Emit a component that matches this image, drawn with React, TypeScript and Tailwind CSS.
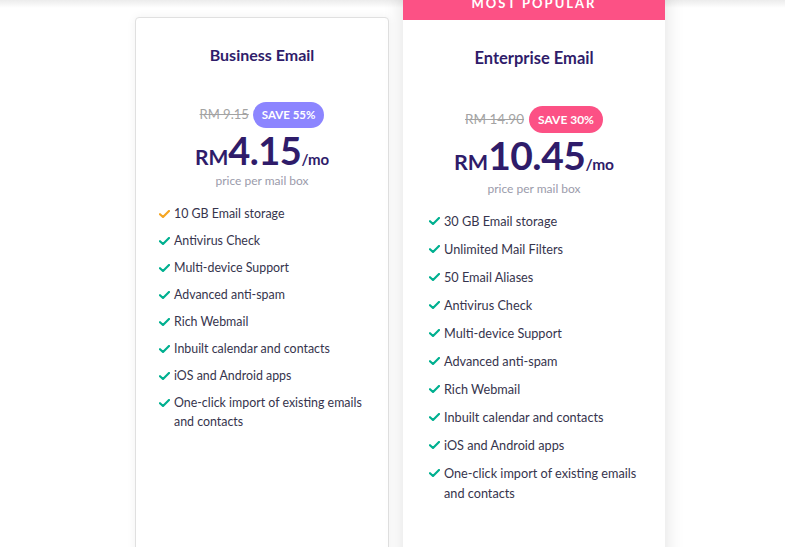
import React from 'react';

type Plan = {
  name: string;
  oldPrice: string;
  save: string;
  price: string;
  features: string[];
  popular?: boolean;
};

const business: Plan = {
  name: 'Business Email',
  oldPrice: 'RM 9.15',
  save: 'SAVE 55%',
  price: '4.15',
  features: [
    '10 GB Email storage',
    'Antivirus Check',
    'Multi-device Support',
    'Advanced anti-spam',
    'Rich Webmail',
    'Inbuilt calendar and contacts',
    'iOS and Android apps',
    'One-click import of existing emails and contacts',
  ],
};

const enterprise: Plan = {
  name: 'Enterprise Email',
  oldPrice: 'RM 14.90',
  save: 'SAVE 30%',
  price: '10.45',
  popular: true,
  features: [
    '30 GB Email storage',
    'Unlimited Mail Filters',
    '50 Email Aliases',
    'Antivirus Check',
    'Multi-device Support',
    'Advanced anti-spam',
    'Rich Webmail',
    'Inbuilt calendar and contacts',
    'iOS and Android apps',
    'One-click import of existing emails and contacts',
  ],
};

const Check: React.FC<{ color: string }> = ({ color }) => (
  <svg width="11" height="8" viewBox="0 0 11 8" className="shrink-0">
    <path d="M1 4.2 L4 7 L10 1" fill="none" stroke={color} strokeWidth="2.2" strokeLinecap="round" strokeLinejoin="round" />
  </svg>
);

const App: React.FC = () => {
  return (
    <div
      className="relative h-[547px] w-[785px] overflow-hidden bg-white"
      style={{ fontFamily: 'Lato, "Open Sans", sans-serif' }}
    >
      {/* header shadow */}
      <div className="absolute left-0 right-0 top-0 h-[8px] bg-gradient-to-b from-[#ececec] to-transparent" />

      <div className="flex gap-[14px] pl-[135px]">
        {/* Business card */}
        <div className="relative mt-[17px] min-h-[600px] w-[254px] rounded-[4px] border border-[#e0e0e0] bg-white shadow-[0_0_10px_rgba(0,0,0,0.06)]">
          <h3 className="pt-[27px] text-center text-[16px] font-bold leading-[20px] text-[#2f1c6a]">
            {business.name}
          </h3>
          <div className="mt-[37px] flex items-center justify-center gap-[4px]">
            <span className="text-[13px] text-[#a3a3a3] line-through">{business.oldPrice}</span>
            <span className="flex h-[26px] items-center rounded-full bg-[#8c85ff] px-[9px] text-[11.5px] font-bold text-white">
              {business.save}
            </span>
          </div>
          <div className="mt-[2px] flex items-baseline justify-center text-[#2f1c6a]">
            <span className="text-[21px] font-bold leading-none">RM</span>
            <span className="text-[38px] font-bold leading-[40px] tracking-[-0.5px]">{business.price}</span>
            <span className="text-[15px] font-bold leading-none">/mo</span>
          </div>
          <p className="mt-[2px] text-center text-[12px] text-[#9b9bab]">price per mail box</p>
          <ul className="mt-[14px] flex flex-col gap-[8px] pl-[23px] pr-[8px]">
            {business.features.map((f, i) => (
              <li key={f} className="flex items-start gap-[4px] text-[12.4px] leading-[19px] text-[#36344d]">
                <span className="flex h-[19px] items-center">
                  <Check color={i === 0 ? '#f5a623' : '#00b090'} />
                </span>
                <span>{f}</span>
              </li>
            ))}
          </ul>
        </div>

        {/* Enterprise card */}
        <div className="relative -mt-[12px] min-h-[620px] w-[262px] bg-white shadow-[0_0_18px_rgba(0,0,0,0.13)]">
          <div className="flex h-[32px] items-center justify-center bg-[#fc5185] text-[13px] font-bold tracking-[2px] text-white">
            MOST POPULAR
          </div>
          <h3 className="pt-[28px] text-center text-[16.5px] font-bold leading-[20px] text-[#2f1c6a]">
            {enterprise.name}
          </h3>
          <div className="mt-[38px] flex items-center justify-center gap-[5px]">
            <span className="text-[13.5px] text-[#a3a3a3] line-through">{enterprise.oldPrice}</span>
            <span className="flex h-[27px] items-center rounded-full bg-[#fc5185] px-[9px] text-[12px] font-bold text-white">
              {enterprise.save}
            </span>
          </div>
          <div className="mt-[2px] flex items-baseline justify-center text-[#2f1c6a]">
            <span className="text-[21.5px] font-bold leading-none">RM</span>
            <span className="text-[39px] font-bold leading-[41px] tracking-[-0.5px]">{enterprise.price}</span>
            <span className="text-[15.5px] font-bold leading-none">/mo</span>
          </div>
          <p className="mt-[4px] text-center text-[12px] text-[#9b9bab]">price per mail box</p>
          <ul className="mt-[13px] flex flex-col gap-[8px] pl-[26px] pr-[8px]">
            {enterprise.features.map((f) => (
              <li key={f} className="flex items-start gap-[4px] text-[12.7px] leading-[20px] text-[#36344d]">
                <span className="flex h-[20px] items-center">
                  <Check color="#00b090" />
                </span>
                <span>{f}</span>
              </li>
            ))}
          </ul>
        </div>
      </div>
    </div>
  );
};

export default App;
